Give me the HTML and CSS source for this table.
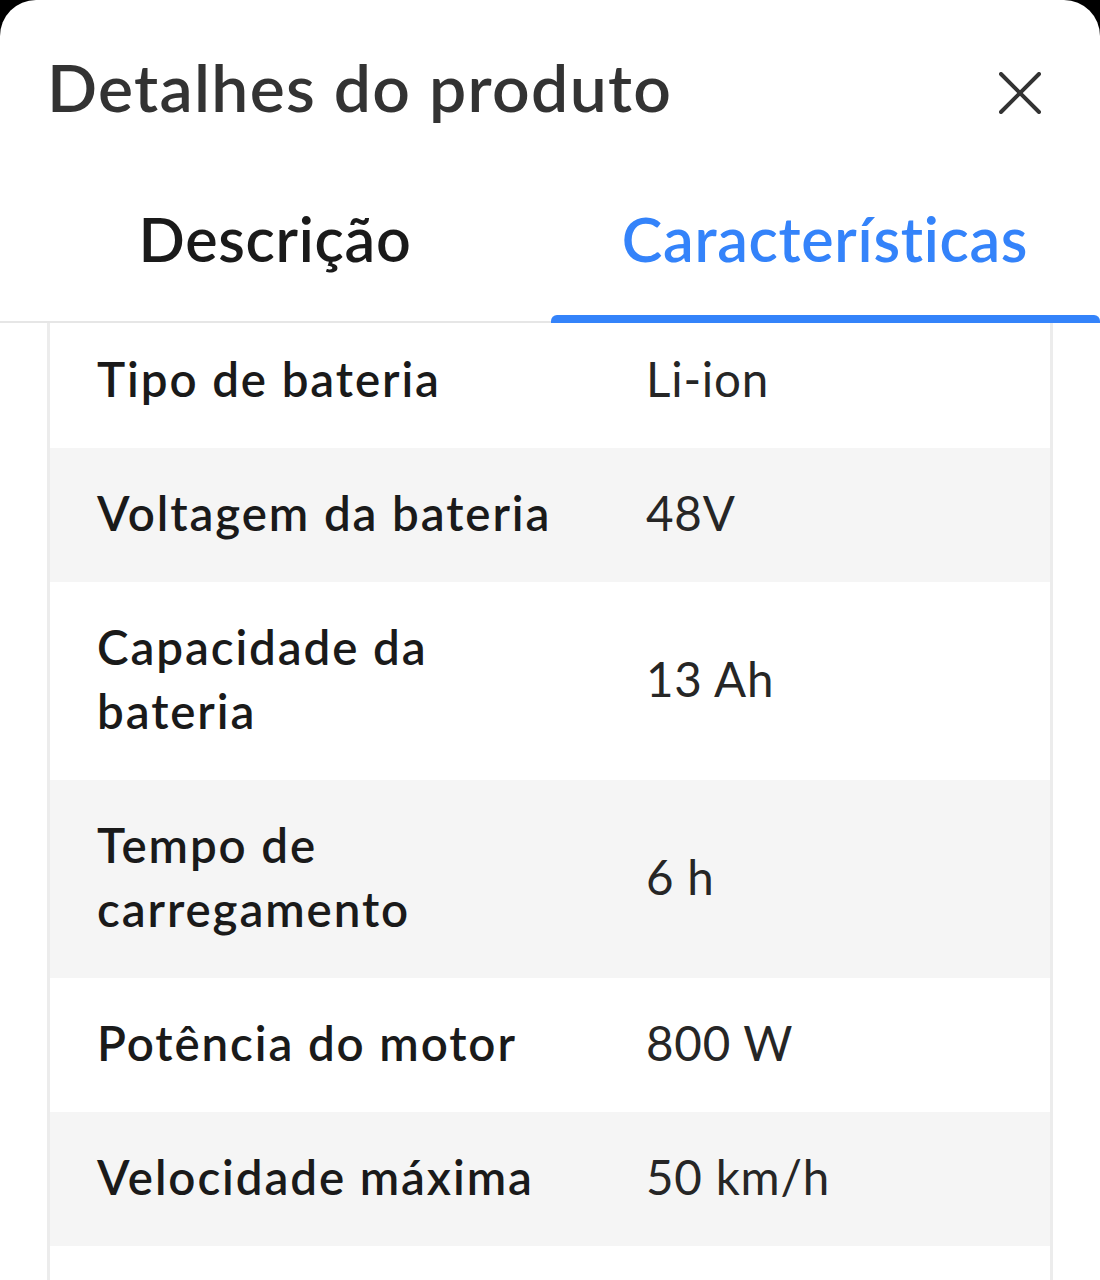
FILE: index.html
```html
<!DOCTYPE html>
<html lang="pt-BR">
<head>
<meta charset="utf-8">
<title>Detalhes do produto</title>
<link rel="stylesheet" href="styles.css">
</head>
<body>
<div class="sheet">
  <header class="header">
    <h1 class="title">Detalhes do produto</h1>
    <button class="close" aria-label="Fechar">
      <svg width="42" height="42" viewBox="0 0 42 42" aria-hidden="true">
        <path d="M2 2 L40 40 M40 2 L2 40" stroke="#333" stroke-width="4" stroke-linecap="round" fill="none"/>
      </svg>
    </button>
  </header>
  <nav class="tabs">
    <div class="tab">Descrição</div>
    <div class="tab tab-active">Características</div>
  </nav>
  <div class="content">
    <div class="specs">
      <div class="row"><div class="label">Tipo de bateria</div><div class="value">Li-ion</div></div>
      <div class="row row-alt"><div class="label">Voltagem da bateria</div><div class="value">48V</div></div>
      <div class="row"><div class="label">Capacidade da bateria</div><div class="value">13 Ah</div></div>
      <div class="row row-alt"><div class="label">Tempo de carregamento</div><div class="value">6 h</div></div>
      <div class="row"><div class="label">Potência do motor</div><div class="value">800 W</div></div>
      <div class="row row-alt"><div class="label">Velocidade máxima</div><div class="value">50 km/h</div></div>
      <div class="row row-empty"><div class="label"></div><div class="value"></div></div>
    </div>
  </div>
</div>
</body>
</html>
```

FILE: styles.css
```css
* { box-sizing: border-box; }
html, body { margin: 0; padding: 0; }
body {
  background: #000;
  font-family: "Lato", "Liberation Sans", sans-serif;
  width: 1100px;
  height: 1280px;
  overflow: hidden;
}
.sheet {
  background: #fff;
  width: 1100px;
  height: 1280px;
  border-radius: 36px 36px 0 0;
  overflow: hidden;
  display: flex;
  flex-direction: column;
}
.header {
  display: flex;
  align-items: center;
  justify-content: space-between;
  padding: 47px 59px 0 47px;
}
.title {
  margin: 0;
  font-size: 66px;
  line-height: 1.2;
  font-weight: 600;
  color: #333;
  letter-spacing: 1.3px;
}
.close {
  border: 0;
  background: none;
  padding: 0;
  margin-top: 13px;
  width: 42px;
  height: 42px;
  display: flex;
}
.tabs {
  display: grid;
  grid-template-columns: 550px 550px;
  border-bottom: 2px solid #e6e6e6;
}
.tab {
  position: relative;
  text-align: center;
  font-size: 61px;
  line-height: 1.2;
  font-weight: 600;
  color: #1a1a1a;
  letter-spacing: 0.7px;
  padding: 76px 0 46px;
}
.tab-active { color: #3483fa; }
.tab-active::after {
  content: "";
  position: absolute;
  left: 1px;
  right: 0;
  bottom: -2px;
  height: 8px;
  background: #3483fa;
  border-radius: 6px 6px 0 0;
}
.content {
  flex: 1;
  overflow: hidden;
}
.specs {
  margin: -9px 47px 0;
  border-left: 3px solid #ececec;
  border-right: 3px solid #ececec;
}
.row {
  display: grid;
  grid-template-columns: 550px 1fr;
  align-items: center;
  background: #fff;
  padding: 33px 0 37px;
}
.row-alt { background: #f5f5f5; }
.row-empty { min-height: 134px; }
.label {
  padding: 0 30px 0 47px;
  font-size: 47.5px;
  line-height: 64px;
  font-weight: 600;
  color: #1a1a1a;
  letter-spacing: 1.9px;
}
.value {
  padding-left: 46px;
  font-size: 47.5px;
  line-height: 64px;
  font-weight: 400;
  color: #262626;
  letter-spacing: 0.8px;
}
```
